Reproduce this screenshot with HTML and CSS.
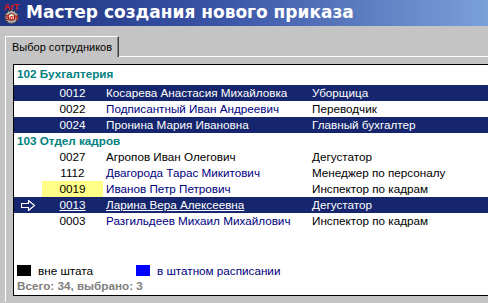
FILE: index.html
```html
<!DOCTYPE html>
<html lang="ru">
<head>
  <meta charset="UTF-8">
  <link rel="stylesheet" href="styles.css">
  <title>Мастер создания нового приказа</title>
</head>
<body>
  <div class="titlebar">
    <svg class="logo" width="21" height="22" viewBox="0 0 21 22">
      <circle cx="10.5" cy="15" r="6.5" fill="#b0b0b0" stroke="#404040" stroke-width="1.5" stroke-dasharray="2 1.4"/>
      <circle cx="10.5" cy="15" r="3.5" fill="#f0e8d0" stroke="#802010" stroke-width="1"/>
      <text x="10.5" y="8" text-anchor="middle" font-family="Liberation Sans, sans-serif" font-size="9" font-weight="bold" fill="#e01818">ArT</text>
      <text x="10.5" y="17.5" text-anchor="middle" font-family="Liberation Sans, sans-serif" font-size="6.5" font-weight="bold" fill="#c01010">Soft</text>
    </svg>
    <span class="title">Мастер создания нового приказа</span>
  </div>

  <div class="tabs">
    <div class="tab">Выбор сотрудников</div>
    <div class="tab-rest"></div>
  </div>

  <div class="page">
    <div class="panel">
      <div class="group first">102 Бухгалтерия</div>
      <div class="row sel"><span class="mark"></span><span class="num">0012</span><span class="name">Косарева Анастасия Михайловка</span><span class="pos">Уборщица</span></div>
      <div class="row"><span class="mark"></span><span class="num">0022</span><span class="name staff">Подписантный Иван Андреевич</span><span class="pos">Переводчик</span></div>
      <div class="row sel"><span class="mark"></span><span class="num">0024</span><span class="name">Пронина Мария Ивановна</span><span class="pos">Главный бухгалтер</span></div>

      <div class="group">103 Отдел кадров</div>
      <div class="row"><span class="mark"></span><span class="num">0027</span><span class="name">Агропов Иван Олегович</span><span class="pos">Дегустатор</span></div>
      <div class="row"><span class="mark"></span><span class="num">1112</span><span class="name staff">Двагорода Тарас Микитович</span><span class="pos">Менеджер по персоналу</span></div>
      <div class="row"><span class="mark"></span><span class="num hl">0019</span><span class="name staff">Иванов Петр Петрович</span><span class="pos">Инспектор по кадрам</span></div>
      <div class="row sel current">
        <span class="mark">
          <svg width="15" height="11" viewBox="0 0 15 11">
            <path d="M0.5 3.5 H7.5 V0.5 L13.5 5.5 L7.5 10.5 V7.5 H0.5 Z" fill="none" stroke="#fff" stroke-width="1.2"/>
          </svg>
        </span>
        <span class="num u">0013</span><span class="name u">Ларина Вера Алексеевна</span><span class="pos">Дегустатор</span>
      </div>
      <div class="row"><span class="mark"></span><span class="num">0003</span><span class="name staff">Разгильдеев Михаил Михайлович</span><span class="pos">Инспектор по кадрам</span></div>

      <div class="legend">
        <span class="swatch black"></span><span class="legend-text">вне штата</span>
        <span class="swatch blue"></span><span class="legend-text staff">в штатном расписании</span>
      </div>
      <div class="total">Всего: 34, выбрано: 3</div>
    </div>
  </div>
</body>
</html>
```

FILE: styles.css
```css
html, body {
    margin: 0;
    padding: 0;
    background-color: #c4c4c4;
    font-family: 'Liberation Sans', Arial, sans-serif;
    font-size: 11.7px;
    overflow: hidden;
}

.titlebar {
    height: 26px;
    display: flex;
    align-items: center;
    background: linear-gradient(to right, #1e3282, #3a54a6 45%, #7aa0d8);
}

.logo {
    margin-left: 1px;
    margin-right: 4px;
}

.title {
    font-family: 'DejaVu Sans', Verdana, sans-serif;
    font-weight: bold;
    font-size: 17px;
    color: #ffffff;
    margin-top: -2px;
}

.tabs {
    display: flex;
    align-items: flex-end;
    padding-top: 10px;
}

.tab {
    margin-left: 5px;
    height: 21px;
    width: 114px;
    box-sizing: border-box;
    border-top: 1px solid #ffffff;
    border-left: 1px solid #ffffff;
    border-right: 1px solid #404040;
    box-shadow: inset -1px 0 0 #808080;
    padding: 4px 0 0 6px;
    font-size: 11px;
    color: #000000;
    white-space: nowrap;
}

.tab-rest {
    flex: 1;
    border-bottom: 1px solid #ffffff;
}

.page {
    margin-left: 5px;
    border-left: 1px solid #ffffff;
    padding: 7px 0 6px 7px;
}

.panel {
    background-color: #ffffff;
    border: 1px solid #000000;
    border-right: none;
    height: 230px;
}

.group {
    height: 16px;
    line-height: 16px;
    padding-left: 3px;
    font-weight: bold;
    color: #008080;
}

.group.first {
    height: 20px;
    line-height: 18px;
}

.row {
    display: flex;
    height: 16px;
    line-height: 16px;
    color: #000000;
    white-space: nowrap;
}

.row.sel {
    background-color: #16266e;
    color: #ffffff;
}

.mark {
    width: 28px;
    display: flex;
    align-items: center;
    justify-content: center;
}

.num {
    width: 61px;
    text-align: center;
}

.num.hl {
    background-color: #ffff88;
}

.name {
    width: 206px;
    padding-left: 3px;
}

.name.staff, .legend-text.staff {
    color: #000080;
}

.u {
    text-decoration: underline;
}

.legend {
    display: flex;
    align-items: center;
    margin-top: 35px;
    padding-left: 3px;
    height: 12px;
}

.swatch {
    width: 14px;
    height: 11px;
}

.swatch.black {
    background-color: #000000;
}

.swatch.blue {
    background-color: #0000ff;
    margin-left: 43px;
}

.legend-text {
    margin-left: 7px;
}

.total {
    padding-left: 3px;
    margin-top: 3px;
    font-weight: bold;
    color: #808080;
}
```
